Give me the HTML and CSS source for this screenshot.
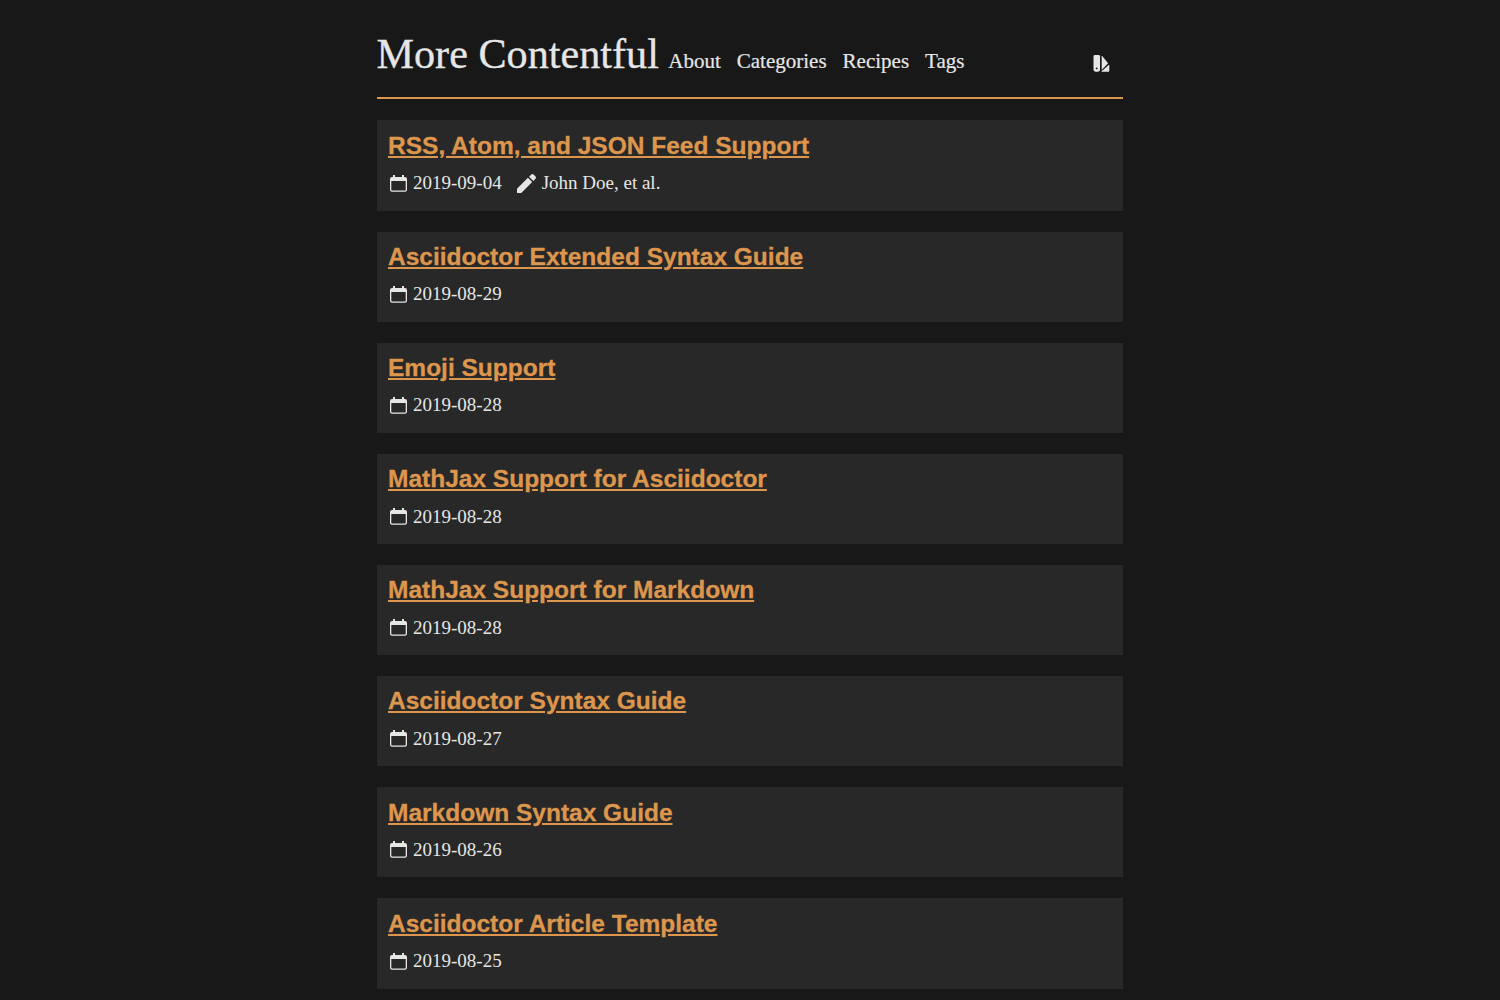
FILE: index.html
```html
<!DOCTYPE html>
<html lang="en">
<head>
    <meta charset="UTF-8">
    <meta name="viewport" content="width=device-width, initial-scale=1.0">
    <title>More Contentful</title>
    <link rel="stylesheet" href="styles.css">
</head>
<body>
    <svg class="sprites" aria-hidden="true">
        <symbol id="icon-date" viewBox="0 0 19 19">
            <path fill-rule="evenodd" d="M5 1v2H4a2 2 0 0 0-2 2v10.700a2 2 0 0 0 2 2h13a2 2 0 0 0 2-2V5a2 2 0 0 0-2-2h-1V1h-2v2H7V1zM3.300 7h14.400v8.700a.7.7 0 0 1-.7.7H4a.7.7 0 0 1-.7-.7z"/>
        </symbol>
        <symbol id="icon-pen" viewBox="0 0 20 20">
            <path d="M0 20v-4.500L11.500 4 16 8.500 4.500 20zM12.700 2.800 14.800.7c.900-.900 1.900-.900 2.800 0l1.700 1.700c.900.900.900 1.900 0 2.800l-2.100 2.100z"/>
        </symbol>
    </svg>

    <div class="wrapper">
        <header class="site-header">
            <a class="site-title" href="#">More Contentful</a>
            <nav class="site-nav">
                <a href="#">About</a>
                <a href="#">Categories</a>
                <a href="#">Recipes</a>
                <a href="#">Tags</a>
            </nav>
            <a class="theme-switch" href="#" aria-label="Change theme">
                <svg viewBox="0 0 18 18" width="18" height="18">
                    <path fill-rule="evenodd" d="M2 1h3.500C6.500 1 7 1.500 7 2.500v13c0 1.300-.9 2.200-2.200 2.200H2.700C1.400 17.700.5 16.800.5 15.500v-13C.5 1.500 1 1 2 1zM3.700 13.500a.9.9 0 1 0 0 1.800.9.9 0 0 0 0-1.800z"/>
                    <path d="M8.700 2.200c0-.3.300-.4.500-.2l5.900 7.300-6.400 6.600z"/>
                    <path d="M16.300 10.400v6.500c0 .5-.3.800-.8.800H8z"/>
                </svg>
            </a>
        </header>

        <main class="post-list">
            <article class="post-card">
                <h2><a href="#">RSS, Atom, and JSON Feed Support</a></h2>
                <div class="post-meta">
                    <span class="meta-item"><svg class="icon"><use href="#icon-date"/></svg>2019-09-04</span>
                    <span class="meta-item"><svg class="icon"><use href="#icon-pen"/></svg>John Doe, et al.</span>
                </div>
            </article>
            <article class="post-card">
                <h2><a href="#">Asciidoctor Extended Syntax Guide</a></h2>
                <div class="post-meta">
                    <span class="meta-item"><svg class="icon"><use href="#icon-date"/></svg>2019-08-29</span>
                </div>
            </article>
            <article class="post-card">
                <h2><a href="#">Emoji Support</a></h2>
                <div class="post-meta">
                    <span class="meta-item"><svg class="icon"><use href="#icon-date"/></svg>2019-08-28</span>
                </div>
            </article>
            <article class="post-card">
                <h2><a href="#">MathJax Support for Asciidoctor</a></h2>
                <div class="post-meta">
                    <span class="meta-item"><svg class="icon"><use href="#icon-date"/></svg>2019-08-28</span>
                </div>
            </article>
            <article class="post-card">
                <h2><a href="#">MathJax Support for Markdown</a></h2>
                <div class="post-meta">
                    <span class="meta-item"><svg class="icon"><use href="#icon-date"/></svg>2019-08-28</span>
                </div>
            </article>
            <article class="post-card">
                <h2><a href="#">Asciidoctor Syntax Guide</a></h2>
                <div class="post-meta">
                    <span class="meta-item"><svg class="icon"><use href="#icon-date"/></svg>2019-08-27</span>
                </div>
            </article>
            <article class="post-card">
                <h2><a href="#">Markdown Syntax Guide</a></h2>
                <div class="post-meta">
                    <span class="meta-item"><svg class="icon"><use href="#icon-date"/></svg>2019-08-26</span>
                </div>
            </article>
            <article class="post-card">
                <h2><a href="#">Asciidoctor Article Template</a></h2>
                <div class="post-meta">
                    <span class="meta-item"><svg class="icon"><use href="#icon-date"/></svg>2019-08-25</span>
                </div>
            </article>
        </main>
    </div>
</body>
</html>
```
FILE: styles.css
```css
html {
    overflow: hidden;
}
body {
    margin: 0;
    height: 1000px;
    overflow: hidden;
    background-color: #181818;
    color: #e6e6e6;
    font-family: "Liberation Serif", "Times New Roman", serif;
    font-size: 19px;
}
a {
    color: inherit;
    text-decoration: none;
}
.sprites {
    display: none;
}
.wrapper {
    width: 746px;
    margin: 0 auto;
    padding-top: 28px;
}
.site-header {
    display: flex;
    align-items: baseline;
    height: 69px;
    border-bottom: 2px solid #dd964d;
}
.site-title {
    margin-left: -0.5px;
    font-size: 42.200px;
    line-height: 52px;
    -webkit-text-stroke: 0.3px;
}
.site-nav {
    display: flex;
    gap: 16px;
    margin-left: 9.400px;
    font-size: 21px;
    -webkit-text-stroke: 0.2px;
}
.theme-switch {
    margin-left: auto;
    margin-right: 12px;
    align-self: flex-start;
    margin-top: 26px;
    fill: #e6e6e6;
}
.post-list {
    display: flex;
    flex-direction: column;
    gap: 21px;
    margin-top: 21.400px;
}
.post-card {
    height: 90.150px;
    box-sizing: border-box;
    padding: 9.400px 11px 0;
    background-color: #282828;
}
.post-card h2 {
    margin: 0;
    font-family: "Liberation Sans", Arial, sans-serif;
    font-size: 24.500px;
    line-height: 31px;
    font-weight: bold;
    -webkit-text-stroke: 0.3px;
}
.post-card h2 a {
    color: #dd964d;
    text-decoration: underline;
}
.post-meta {
    display: flex;
    gap: 15px;
    margin-top: 10.300px;
    line-height: 24px;
}
.meta-item {
    display: flex;
    align-items: center;
    gap: 6px;
}
.icon {
    width: 19px;
    height: 19px;
    fill: #e6e6e6;
}
```
